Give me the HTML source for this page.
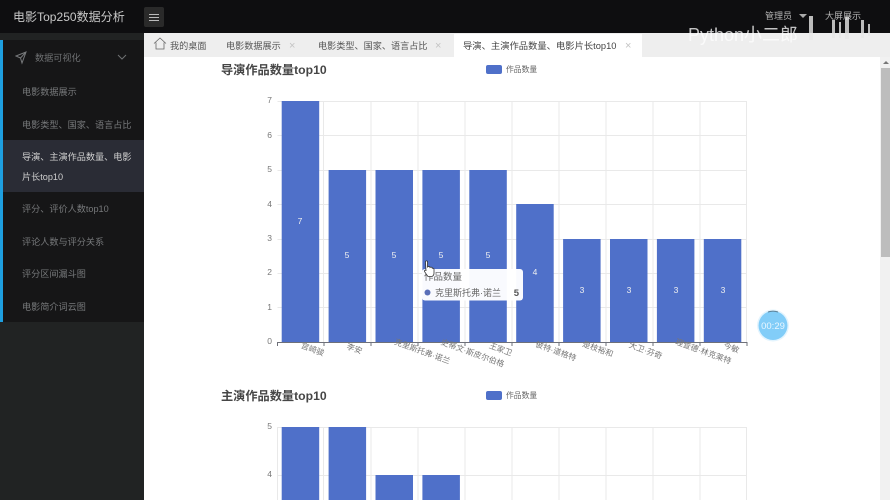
<!DOCTYPE html>
<html lang="zh">
<head>
<meta charset="utf-8">
<style>
html,body{margin:0;padding:0;background:#fff}
body{width:890px;height:500px;position:relative;overflow:hidden;font-family:"Liberation Sans","Noto Sans CJK SC",sans-serif}
#w{position:absolute;left:0;top:0;width:890px;height:500px;overflow:hidden;filter:blur(.35px)}
.a{position:absolute;white-space:nowrap}
.m{left:22px;font-size:9.15px;color:#77797b;line-height:14px}
.t{top:39px;font-size:9.15px;line-height:14px;color:#555}
.x{top:39px;font-size:11px;line-height:14px;color:#c4c4c4}
svg text{font-family:"Liberation Sans","Noto Sans CJK SC",sans-serif}
</style>
</head>
<body>
<div id="w">
<!-- top bar -->
<div class="a" style="left:0;top:0;width:890px;height:33px;background:#0e0e10"></div>
<div class="a" style="left:13px;top:9px;font-size:12px;line-height:16px;color:#c9c9c9;letter-spacing:.03px">电影Top250数据分析</div>
<div class="a" style="left:144px;top:7px;width:20px;height:20px;background:#2a2a2a;border-radius:2px"></div>
<div class="a" style="left:149px;top:14px;width:10px;height:1px;background:#bbb"></div>
<div class="a" style="left:149px;top:17px;width:10px;height:1px;background:#bbb"></div>
<div class="a" style="left:149px;top:20px;width:10px;height:1px;background:#bbb"></div>
<div class="a" style="left:765px;top:9px;font-size:9px;line-height:14px;color:#b5b5b5">管理员</div>
<div class="a" style="left:799px;top:14px;width:0;height:0;border:4px solid transparent;border-top:4px solid #aaa;border-bottom:0"></div>
<div class="a" style="left:825px;top:9px;font-size:9px;line-height:14px;color:#b5b5b5">大屏展示</div>

<!-- sidebar -->
<div class="a" style="left:0;top:33px;width:144px;height:467px;background:#212323"></div>
<div class="a" style="left:3px;top:40px;width:141px;height:282px;background:#161617"></div>
<div class="a" style="left:0;top:40px;width:3px;height:282px;background:#1e9fe0"></div>
<div class="a" style="left:3px;top:140px;width:141px;height:52px;background:#2a2c35"></div>
<svg class="a" style="left:15px;top:51px" width="12" height="14" viewBox="0 0 12 14" fill="none" stroke="#77797b" stroke-width="1"><path d="M1 5 L11 1 L7 12 L5.500 7 Z M5.500 7 L11 1"/></svg>
<div class="a" style="left:35px;top:51px;font-size:9.150px;line-height:14px;color:#6f7173">数据可视化</div>
<svg class="a" style="left:117px;top:53px" width="10" height="8" viewBox="0 0 10 8" fill="none" stroke="#6f7173" stroke-width="1"><path d="M1 2 L5 6 L9 2"/></svg>
<div class="a m" style="top:85px">电影数据展示</div>
<div class="a m" style="top:118px">电影类型、国家、语言占比</div>
<div class="a m" style="top:150px;color:#d0d0d0">导演、主演作品数量、电影</div>
<div class="a m" style="top:170px;color:#d0d0d0">片长top10</div>
<div class="a m" style="top:202px">评分、评价人数top10</div>
<div class="a m" style="top:235px">评论人数与评分关系</div>
<div class="a m" style="top:267px">评分区间漏斗图</div>
<div class="a m" style="top:300px">电影简介词云图</div>

<!-- tabs -->
<div class="a" style="left:144px;top:33px;width:746px;height:24px;background:#eeeeee"></div>
<div class="a" style="left:454px;top:34px;width:188px;height:23px;background:#fff"></div>
<svg class="a" style="left:153px;top:37px" width="14" height="13" viewBox="0 0 14 13" fill="none" stroke="#666" stroke-width="0.8"><path d="M1 6.500 L7 1 L13 6.500 M3 5.500 V12 H11 V5.500"/></svg>
<div class="a t" style="left:170px">我的桌面</div>
<div class="a t" style="left:226px">电影数据展示</div>
<div class="a x" style="left:289px">×</div>
<div class="a t" style="left:318px">电影类型、国家、语言占比</div>
<div class="a x" style="left:435px">×</div>
<div class="a t" style="left:463px;color:#444;font-size:9.300px">导演、主演作品数量、电影片长top10</div>
<div class="a x" style="left:625px">×</div>

<!-- scrollbar -->
<div class="a" style="left:880px;top:57px;width:10px;height:443px;background:#f1f1f1"></div>
<div class="a" style="left:881px;top:68px;width:9px;height:189px;background:#bdbdbd"></div>
<div class="a" style="left:883px;top:61px;width:0;height:0;border:3px solid transparent;border-bottom:3px solid #777;border-top:0"></div>

<!-- charts -->
<svg class="a" style="left:144px;top:57px;overflow:visible" width="736" height="443" viewBox="144 57 736 443">
<g stroke="#e9e9e9" stroke-width="1" fill="none">
<path d="M277.500 101.500H747M277.500 135.500H747M277.500 170.500H747M277.500 204.500H747M277.500 239.500H747M277.500 273.500H747M277.500 307.500H747"/>
<path d="M323.500 101V342M371 101V342M418 101V342M465 101V342M512 101V342M559 101V342M606 101V342M653 101V342M700 101V342M746.500 101V342"/>
<path d="M277.500 427.500H747M277.500 475.500H747"/>
<path d="M323.500 427V500M371 427V500M418 427V500M465 427V500M512 427V500M559 427V500M606 427V500M653 427V500M700 427V500M746.500 427V500M277.500 427V500"/>
</g>
<g fill="#4f70c9">
<rect x="281.700" y="101" width="37.500" height="241"/>
<rect x="328.600" y="170" width="37.500" height="172"/>
<rect x="375.500" y="170" width="37.500" height="172"/>
<rect x="422.400" y="170" width="37.500" height="172"/>
<rect x="469.300" y="170" width="37.500" height="172"/>
<rect x="516.200" y="204" width="37.500" height="138"/>
<rect x="563.100" y="239" width="37.500" height="103"/>
<rect x="610" y="239" width="37.500" height="103"/>
<rect x="656.900" y="239" width="37.500" height="103"/>
<rect x="703.800" y="239" width="37.500" height="103"/>
<rect x="281.700" y="427" width="37.500" height="73"/>
<rect x="328.600" y="427" width="37.500" height="73"/>
<rect x="375.500" y="475" width="37.500" height="25"/>
<rect x="422.400" y="475" width="37.500" height="25"/>
</g>
<path d="M277.500 346V342.500H747V346M324 342V346M371 342V346M418 342V346M465 342V346M512 342V346M559 342V346M606 342V346M653 342V346M700 342V346" stroke="#6e7079" fill="none"/>
<g font-size="8.500" fill="#f0f0f0" text-anchor="middle">
<text x="300" y="224">7</text><text x="347" y="258">5</text><text x="394" y="258">5</text><text x="441" y="258">5</text><text x="488" y="258">5</text><text x="535" y="275">4</text><text x="582" y="293">3</text><text x="629" y="293">3</text><text x="676" y="293">3</text><text x="723" y="293">3</text>
</g>
<g font-size="8.500" fill="#777" text-anchor="end">
<text x="272" y="103">7</text><text x="272" y="138">6</text><text x="272" y="172">5</text><text x="272" y="207">4</text><text x="272" y="241">3</text><text x="272" y="275">2</text><text x="272" y="310">1</text><text x="272" y="344">0</text>
<text x="272" y="429">5</text><text x="272" y="477">4</text>
</g>
<g font-size="8" fill="#777" text-anchor="end">
<text transform="translate(323,356) rotate(20)">宫崎骏</text>
<text transform="translate(361,354) rotate(20)">李安</text>
<text transform="translate(449,364) rotate(20)">克里斯托弗·诺兰</text>
<text transform="translate(503,367) rotate(20)">史蒂文·斯皮尔伯格</text>
<text transform="translate(511,356) rotate(20)">王家卫</text>
<text transform="translate(575,361) rotate(20)">彼特·道格特</text>
<text transform="translate(612,357) rotate(20)">是枝裕和</text>
<text transform="translate(661,359) rotate(20)">大卫·芬奇</text>
<text transform="translate(730,364) rotate(20)">理查德·林克莱特</text>
<text transform="translate(738,353) rotate(20)">今敏</text>
</g>
<g font-weight="700" font-size="12.200" fill="#464646">
<text x="221" y="74">导演作品数量top10</text>
<text x="221" y="400">主演作品数量top10</text>
</g>
<rect x="486" y="65" width="16" height="9" rx="2" fill="#4f70c9"/>
<rect x="486" y="391" width="16" height="9" rx="2" fill="#4f70c9"/>
<g font-size="7.800" fill="#666">
<text x="506" y="72">作品数量</text>
<text x="506" y="398">作品数量</text>
</g>
<!-- tooltip -->
<rect x="422" y="269" width="101" height="31.500" rx="3" fill="#fff" opacity=".97"/>
<text x="424" y="280" font-size="9.500" fill="#666">作品数量</text>
<circle cx="427.500" cy="292.500" r="3" fill="#5a6fb8"/>
<text x="435" y="296" font-size="9" fill="#666">克里斯托弗·诺兰</text>
<text x="519" y="296" font-size="9.500" font-weight="700" fill="#555" text-anchor="end">5</text>
<!-- cursor -->
<path d="M425.500 262c0-1.500 2-1.500 2 0v5c1-1 2.500-.5 2.500.5 1-.8 2.300-.2 2.300.8.800-.3 1.700.2 1.700 1v4c0 1.500-1 2.700-2 3.200h-4c-1.200-1.500-2.500-3.500-3.500-5-.5-1 .8-1.800 1.500-1l0 .5z" fill="#fff" stroke="#333" stroke-width=".8"/>
<!-- timer -->
<circle cx="773" cy="325.500" r="16" fill="#e3f4fe"/>
<circle cx="773" cy="325.500" r="14.500" fill="#82cdf8"/>
<path d="M768 312a14.500 14.500 0 0 1 10 0" stroke="#5b7f95" fill="none"/>
<text x="773" y="329" font-size="9.500" fill="#e8f6ff" text-anchor="middle">00:29</text>
</svg>

<!-- watermark -->
<div class="a" style="left:688px;top:24px;font-size:18px;line-height:22px;color:#fff;opacity:.75">Python小二郎</div>
<svg class="a" style="left:805px;top:14px" width="76" height="28" viewBox="0 0 76 28" fill="#e8e8e8" opacity=".8">
<rect x="4" y="2" width="4" height="24"/><rect x="27" y="6" width="3" height="18"/><rect x="34" y="8" width="2" height="16"/><rect x="40" y="3" width="4" height="22"/><rect x="56" y="6" width="3" height="18"/><rect x="63" y="10" width="2" height="12"/>
</svg>
</div>
</body>
</html>
